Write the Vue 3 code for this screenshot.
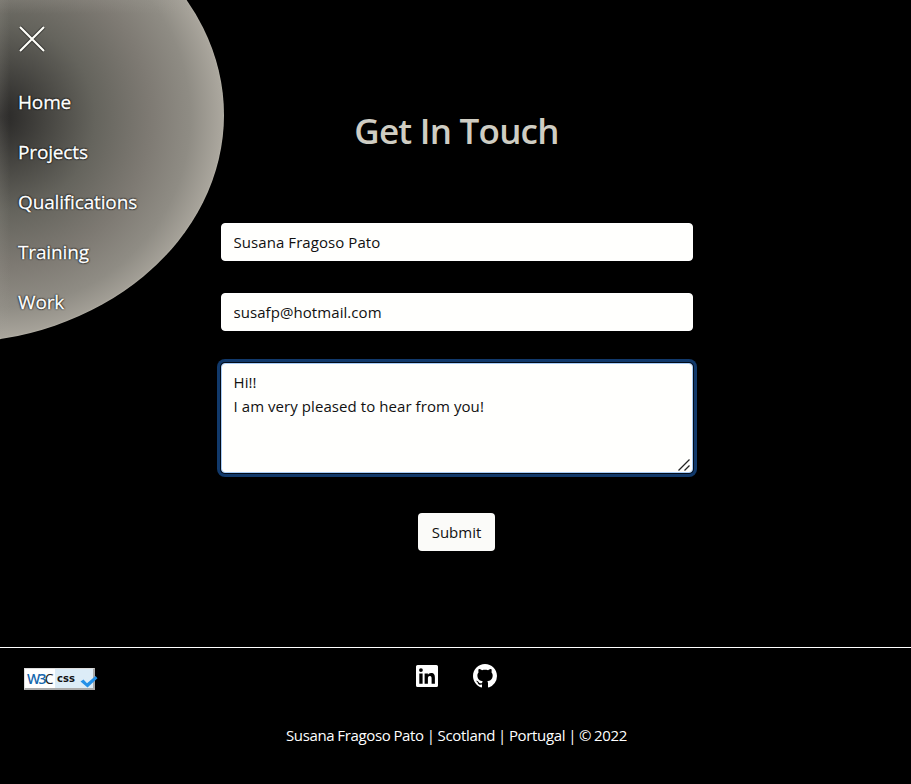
<script setup>
import { ref } from 'vue'

const links = ['Home', 'Projects', 'Qualifications', 'Training', 'Work']
const name = ref('Susana Fragoso Pato')
const email = ref('susafp@hotmail.com')
const message = ref('Hi!!\nI am very pleased to hear from you!')
</script>

<template>
  <div class="page">
    <nav class="menu">
      <div class="disc"></div>
      <div class="menu-items">
        <svg class="close" width="28" height="28" viewBox="0 0 28 28">
          <path d="M2 2 26 26M26 2 2 26" fill="none" stroke="#1c1c1a" stroke-opacity=".5" stroke-width="4" />
          <path d="M2 2 26 26M26 2 2 26" fill="none" stroke="#fffffa" stroke-width="2.1" />
        </svg>
        <a v-for="link in links" :key="link">{{ link }}</a>
      </div>
    </nav>

    <main>
      <h1>Get In Touch</h1>
      <form @submit.prevent>
        <input v-model="name" type="text" />
        <input v-model="email" type="text" />
        <div class="area">
          <textarea v-model="message" spellcheck="false"></textarea>
          <svg class="grip" width="14" height="14" viewBox="0 0 14 14">
            <path d="M1.5 12.5 12.5 1.5M7.5 12.5 12.5 7.5" fill="none" stroke="#222" stroke-width="1.3" />
          </svg>
        </div>
        <button type="submit">Submit</button>
      </form>
    </main>

    <footer>
      <div class="badge">
        <span class="w3"><b>W3</b><i>C</i></span>
        <span class="css">css</span>
        <svg class="tick" width="20" height="14" viewBox="0 0 20 14">
          <path d="M1.5 6.5 4.5 4.5 8 8.2 16.5 1 18.5 3.2 8.5 12.5Z" fill="#2490e8" />
        </svg>
      </div>
      <div class="social">
        <svg width="24" height="24" viewBox="0 0 24 24">
          <path fill="#fff" fill-rule="evenodd" d="M2.6 1h18.8A1.6 1.6 0 0 1 23 2.6v18.8a1.6 1.6 0 0 1-1.6 1.6H2.6A1.6 1.6 0 0 1 1 21.4V2.6A1.6 1.6 0 0 1 2.6 1ZM4.3 9.4v10.3h3.3V9.4ZM5.95 4.2a1.9 1.9 0 1 0 0 3.8 1.9 1.9 0 0 0 0-3.8ZM9.6 9.4v10.3h3.3v-5.1c0-1.4.3-2.7 2-2.7s1.7 1.6 1.7 2.8v5h3.3V14c0-2.8-.6-4.9-3.9-4.9-1.5 0-2.6.9-3 1.7h-.1V9.4Z" />
        </svg>
        <svg width="24" height="24" viewBox="0 0 16 16">
          <path fill="#fff" d="M8 0C3.58 0 0 3.58 0 8c0 3.54 2.29 6.53 5.47 7.59.4.07.55-.17.55-.38 0-.19-.01-.82-.01-1.49-2.01.37-2.53-.49-2.69-.94-.09-.23-.48-.94-.82-1.13-.28-.15-.68-.52-.01-.53.63-.01 1.08.58 1.23.82.72 1.21 1.87.87 2.33.66.07-.52.28-.87.51-1.07-1.78-.2-3.64-.89-3.64-3.95 0-.87.31-1.59.82-2.15-.08-.2-.36-1.02.08-2.12 0 0 .67-.21 2.2.82.64-.18 1.32-.27 2-.27s1.36.09 2 .27c1.53-1.04 2.2-.82 2.2-.82.44 1.1.16 1.92.08 2.12.51.56.82 1.27.82 2.15 0 3.07-1.87 3.75-3.65 3.95.29.25.54.73.54 1.48 0 1.07-.01 1.93-.01 2.2 0 .21.15.46.55.38A8.01 8.01 0 0 0 16 8c0-4.42-3.58-8-8-8Z" />
        </svg>
      </div>
      <p>Susana Fragoso Pato | Scotland | Portugal | © 2022</p>
    </footer>
  </div>
</template>

<style>
body {
  margin: 0;
  background: #000;
}
</style>

<style scoped>
.page {
  position: relative;
  height: 784px;
  overflow: hidden;
  background: #000;
  color: #fff;
  font-family: "Open Sans", "Noto Sans", sans-serif;
  display: flex;
  flex-direction: column;
}
.menu {
  position: absolute;
  left: 0;
  top: 0;
  width: 224px;
  height: 345px;
}
.disc {
  position: absolute;
  left: -324px;
  top: -113px;
  width: 548px;
  height: 456px;
  border-radius: 50%;
  background:
    linear-gradient(90deg, rgba(160, 157, 149, 0.16) 324px, transparent 334px),
    linear-gradient(180deg, rgba(160, 157, 149, 0.2) 113px, transparent 127px),
    radial-gradient(circle at 324px 230px, #282726 0, #454440 45px, #65645d 95px, #7e7a73 150px, #8f8c84 190px, #aaa69d 221px, #b3afa5 240px);
  box-shadow: inset 0 0 2px #c4c1b5;
}
.menu-items {
  position: relative;
  padding: 25px 18px;
  display: flex;
  flex-direction: column;
  align-items: flex-start;
}
.close {
  margin-bottom: 24px;
}
.menu-items a {
  height: 50px;
  line-height: 50px;
  font-size: 19px;
  letter-spacing: -0.15px;
  -webkit-text-stroke: 0.35px #fff;
  text-shadow: 0 0 2px #000, 0 0 2px #000, 0 0 1px #000;
}
main {
  height: 647px;
  display: flex;
  flex-direction: column;
  align-items: center;
  padding-left: 2px;
}
h1 {
  margin: 106px 0 68px;
  height: 49px;
  line-height: 49px;
  font-size: 35px;
  font-weight: 600;
  letter-spacing: -0.75px;
  color: #cfcdc3;
  white-space: nowrap;
}
form {
  width: 472px;
  display: flex;
  flex-direction: column;
  align-items: center;
}
input,
textarea {
  box-sizing: border-box;
  width: 472px;
  padding: 0 12px;
  border: 1px solid #fff;
  border-radius: 4px;
  background: #fffffd;
  color: #111;
  font: 15px/24px "Open Sans", "Noto Sans", sans-serif;
  letter-spacing: 0.07px;
  outline: 0;
}
input {
  height: 38px;
  margin-bottom: 32px;
}
.area {
  position: relative;
  height: 110px;
  margin-bottom: 40px;
}
textarea {
  display: block;
  height: 110px;
  padding: 6px 12px;
  border-color: #a9cdf8;
  resize: none;
  overflow: hidden;
  box-shadow: 0 0 0 1px #020b18, 0 0 0 4px #11396b;
}
.grip {
  position: absolute;
  right: 2px;
  bottom: 1px;
}
button {
  width: 77px;
  height: 38px;
  padding: 0;
  border: 0;
  border-radius: 4px;
  background: #fbfbf9;
  color: #111;
  font: 15px/38px "Open Sans", "Noto Sans", sans-serif;
}
footer {
  border-top: 1px solid #fff;
  height: 136px;
  display: grid;
  grid-template-columns: 1fr 82px 1fr;
  grid-template-rows: 60px 1fr;
}
.badge {
  position: relative;
  box-sizing: border-box;
  width: 71px;
  height: 22px;
  margin: 20px 0 0 24px;
  display: flex;
  border: 1px solid #ddd;
  border-right: 2px solid #aaa;
  border-bottom: 2px solid #aaa;
  background: #fff;
  line-height: 19px;
}
.w3 {
  width: 30px;
  flex: none;
  padding-left: 2px;
  box-sizing: border-box;
  font-size: 14px;
  letter-spacing: -1.7px;
}
.w3 b {
  color: #1767ae;
  font-weight: 600;
}
.w3 i {
  color: #222;
  font-style: normal;
}
.css {
  flex: 1;
  padding-left: 2px;
  background: #dcecf7;
  color: #111;
  font: bold 10px/19px "DejaVu Sans", sans-serif;
}
.tick {
  position: absolute;
  right: -6px;
  top: 6px;
}
.social {
  display: flex;
  justify-content: space-between;
  padding-top: 16px;
}
footer p {
  grid-column: 1 / -1;
  margin: 0;
  padding: 15px 0 0 2px;
  line-height: 24px;
  font-size: 15px;
  letter-spacing: -0.34px;
  word-spacing: -0.6px;
  text-align: center;
}
</style>
